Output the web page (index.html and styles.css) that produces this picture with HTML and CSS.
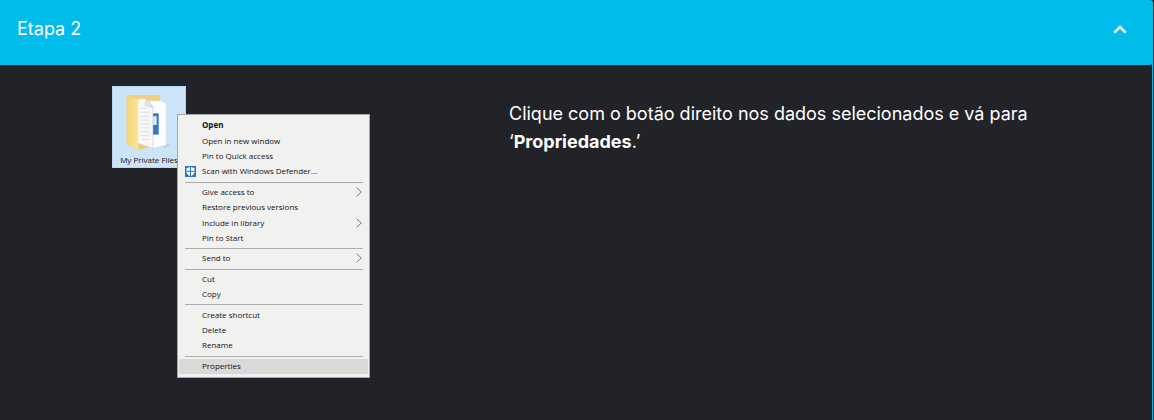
FILE: index.html
```html
<!DOCTYPE html>
<html lang="pt">
<head>
<meta charset="utf-8">
<title>Etapa 2</title>
<link rel="stylesheet" href="styles.css">
</head>
<body>
<section class="step">
  <h2 class="step-heading">
    <button class="step-toggle" type="button" aria-expanded="true" aria-controls="step-body">
      <span>Etapa 2</span>
      <svg class="chevron" viewBox="0 0 14 9" aria-hidden="true"><path d="M1.300 7.600 7 2l5.700 5.600"/></svg>
    </button>
  </h2>
  <div class="step-body" id="step-body">
    <figure class="demo">
      <div class="folder">
        <svg class="folder-icon" viewBox="0 0 50 62" aria-hidden="true">
          <defs>
            <linearGradient id="flap" x1="0" x2="1"><stop offset="0" stop-color="#f3d477"/><stop offset="1" stop-color="#fbe398"/></linearGradient>
          </defs>
          <path d="M40 57 47 54 41 51z" fill="#b5cfe6"/>
          <path d="M2 2H36V54L14 59 2 53z" fill="#efcf78"/>
          <path d="M25 8H38L43 11V54L25 58z" fill="#fbfcfd" stroke="#ccd3da" stroke-width=".6"/>
          <path d="M29 21h6v22h-6z" fill="#3179c2"/>
          <path d="M29 24h4v9h-4z" fill="#d8e9f8"/>
          <path d="M13 6H22L29 14V57L13 52z" fill="#f7f8f8" stroke="#c6cacd" stroke-width=".6"/>
          <path d="m22 6-1 7 8 2z" fill="#e4e7e9" stroke="#bfc4c8" stroke-width=".5"/>
          <path d="M16 16h6M16 20h10M16 24h10M16 28h10M16 32h10M16 36h10M16 40h10M16 44h10M17 48h9" stroke="#d5dadd" stroke-width=".8"/>
          <path d="M2 2 14 7V59L2 53z" fill="url(#flap)"/>
        </svg>
        <span class="folder-name">My Private Files</span>
      </div>
      <div class="menu">
        <button class="item default" type="button">Open</button>
        <button class="item" type="button">Open in new window</button>
        <button class="item" type="button">Pin to Quick access</button>
        <button class="item" type="button">
          <svg class="shield" viewBox="0 0 11 11" aria-hidden="true"><path d="M0 0h11v11H0z" fill="#2475c7"/><path d="M5.500 1 9.500 2v4Q9 9 5.500 10.200 2 9 1.500 6V2z" fill="#fff"/><path d="M5.500 1v9.200M1.500 5.300h8" stroke="#2475c7"/></svg>
          Scan with Windows Defender...
        </button>
        <hr class="rule">
        <button class="item" type="button">Give access to<svg class="arrow" viewBox="0 0 6 10" aria-hidden="true"><path d="m.7.7 4.600 4.300L.7 9.300"/></svg></button>
        <button class="item" type="button">Restore previous versions</button>
        <button class="item" type="button">Include in library<svg class="arrow" viewBox="0 0 6 10" aria-hidden="true"><path d="m.7.7 4.600 4.300L.7 9.300"/></svg></button>
        <button class="item" type="button">Pin to Start</button>
        <hr class="rule">
        <button class="item" type="button">Send to<svg class="arrow" viewBox="0 0 6 10" aria-hidden="true"><path d="m.7.7 4.600 4.300L.7 9.300"/></svg></button>
        <hr class="rule">
        <button class="item" type="button">Cut</button>
        <button class="item" type="button">Copy</button>
        <hr class="rule">
        <button class="item" type="button">Create shortcut</button>
        <button class="item" type="button">Delete</button>
        <button class="item" type="button">Rename</button>
        <hr class="rule">
        <button class="item selected" type="button">Properties</button>
      </div>
    </figure>
    <p class="instruction">Clique com o botão direito nos dados selecionados e vá para ‘<strong>Propriedades</strong>.’</p>
  </div>
</section>
</body>
</html>
```
FILE: styles.css
```css
* {
  box-sizing: border-box;
}

body {
  margin: 0;
  padding-right: 1px;
  background: #222328;
  color: #fff;
  font: 18px/28px Inter, "Liberation Sans", sans-serif;
}

.step {
  min-height: 100vh;
  border-right: 1px solid #00bceb;
  border-top-right-radius: 4px;
}

.step-heading {
  margin: 0 -1px 0 0;
  font: inherit;
}

.step-toggle {
  display: flex;
  justify-content: space-between;
  align-items: center;
  width: 100%;
  padding: 15px 26px 22px 17px;
  border: 0;
  border-radius: 0 4px 4px 0;
  background: #00bceb;
  color: inherit;
  font: inherit;
  text-align: left;
}

.chevron {
  width: 14px;
  height: 9px;
  fill: none;
  stroke: #fff;
  stroke-width: 2.5;
}

.step-body {
  display: grid;
  grid-template-columns: 5fr 7fr;
  padding: 21px 0;
}

.demo {
  display: flex;
  justify-content: center;
  align-items: flex-start;
  margin: 0;
  padding-left: 2px;
  color: #111;
  font: 8px/14px "Open Sans", "Noto Sans", sans-serif;
}

.folder {
  display: flex;
  flex-direction: column;
  align-items: center;
  width: 74px;
  padding-top: 6px;
  border: 1px solid #b9d8f2;
  background: #cce4f7;
}

.folder-icon {
  width: 50px;
  height: 60px;
}

.folder-name {
  white-space: nowrap;
}

.menu {
  display: flex;
  flex-direction: column;
  width: 193px;
  min-height: 264px;
  margin: 28px 0 0 -9px;
  padding: 3px 1px;
  border: 1px solid #a5a5a5;
  background: #f1f1f0;
  z-index: 1;
}

.item {
  display: grid;
  grid-template-columns: 17px 1fr 6px;
  align-items: center;
  flex: 1 1 15px;
  padding: 0 6px 1px;
  border: 0;
  background: none;
  color: inherit;
  font: inherit;
  text-align: left;
  white-space: nowrap;
}

.item::before {
  content: "";
}

.item:has(.shield)::before {
  display: none;
}

.default {
  font-weight: 700;
}

.selected {
  background: #d9d9d9;
}

.shield {
  width: 11px;
  height: 11px;
}

.arrow {
  width: 6px;
  height: 10px;
  fill: none;
  stroke: #777;
}

.rule {
  width: 178px;
  height: 1px;
  margin: 2px auto;
  border: 0;
  background: #adadad;
}

.instruction {
  margin: 0;
  padding: 14px 120px 0 29px;
}
```
